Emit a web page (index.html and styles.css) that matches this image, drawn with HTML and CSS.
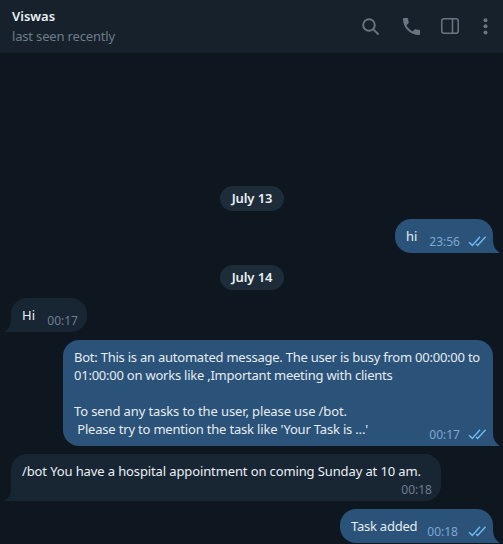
FILE: index.html
```html
<!DOCTYPE html>
<html lang="en">
<head>
<meta charset="utf-8">
<title>Viswas</title>
<link rel="stylesheet" href="styles.css">
</head>
<body>
<svg width="0" height="0" class="defs">
  <symbol id="checks" viewBox="0 0 19 11"><path d="M1 6.200 4.300 9.400 12 .8M8.200 8 9.600 9.400 17.600 .8"/></symbol>
  <symbol id="tail" viewBox="0 0 7 16"><path d="M0 2C0 9 2 12.500 6.300 15.200Q6.600 16 5.500 16H0Z"/></symbol>
</svg>
<header class="topbar">
  <div class="peer">
    <h1>Viswas</h1>
    <p>last seen recently</p>
  </div>
  <nav class="actions">
    <svg class="search" viewBox="0 0 18 18"><circle cx="7" cy="7" r="5.800"/><path d="m11.300 11.300 5.200 5.200"/></svg>
    <svg class="call" viewBox="3 3 18 18"><path d="M6.620 10.790c1.440 2.830 3.760 5.140 6.590 6.590l2.200-2.200c.27-.27.67-.36 1.020-.24 1.120.37 2.330.57 3.570.57.55 0 1 .45 1 1V20c0 .55-.45 1-1 1-9.390 0-17-7.610-17-17 0-.55.45-1 1-1h3.500c.55 0 1 .45 1 1 0 1.250.2 2.450.57 3.570.11.35.03.74-.25 1.020z"/></svg>
    <svg class="panel" viewBox="0 0 18 16"><rect x=".8" y=".8" width="16.400" height="14.400" rx="2.200"/><path d="M11.500 1v14"/></svg>
    <svg class="more" viewBox="0 0 5 17"><circle cx="2.500" cy="2.300" r="2"/><circle cx="2.500" cy="8.300" r="2"/><circle cx="2.500" cy="14.400" r="2"/></svg>
  </nav>
</header>
<main class="chat">
  <div class="date">July 13</div>
  <div class="bubble out w-hi"><span class="text">hi</span><span class="meta"><time>23:56</time><svg class="checks"><use href="#checks"/></svg></span><svg class="tail"><use href="#tail"/></svg></div>
  <div class="date second">July 14</div>
  <div class="bubble in w-hello"><span class="text">Hi</span><span class="meta"><time>00:17</time></span><svg class="tail"><use href="#tail"/></svg></div>
  <div class="bubble out w-auto"><span class="text"><span class="tight">Bot: This is an automated message. The user is busy from 00:00:00 to
01:00:00 on works like ,Important meeting with clients</span>

<span class="loose">To send any tasks to the user, please use /bot.</span>
<span class="snug"> Please try to mention the task like 'Your Task is ...'</span></span><span class="meta"><time>00:17</time><svg class="checks"><use href="#checks"/></svg></span><svg class="tail"><use href="#tail"/></svg></div>
  <div class="bubble in w-task"><span class="text loose">/bot You have a hospital appointment on coming Sunday at 10 am.</span><span class="meta"><time>00:18</time></span><svg class="tail"><use href="#tail"/></svg></div>
  <div class="bubble out w-added"><span class="text tight">Task added</span><span class="meta"><time>00:18</time><svg class="checks"><use href="#checks"/></svg></span><svg class="tail"><use href="#tail"/></svg></div>
</main>
</body>
</html>
```
FILE: styles.css
```css
* { box-sizing: border-box; }
body {
  margin: 0;
  height: 544px;
  overflow: hidden;
  background: #0e1620;
  color: #e9f0f5;
  font: 13px/18px "Noto Sans", "Open Sans", sans-serif;
}
.defs { display: none; }
.topbar {
  display: flex;
  justify-content: space-between;
  height: 53px;
  padding: 7px 15px 0 12px;
  background: #17212b;
}
.peer h1 { margin: 0; font-size: 13px; line-height: 18px; font-weight: 600; }
.peer p { margin: 2px 0 0; line-height: 18px; color: #6d7c8a; letter-spacing: -.17px; }
.actions { display: flex; align-items: flex-start; padding-top: 11px; }
.actions svg { fill: none; stroke: #697681; stroke-width: 1.9; }
.actions .search { width: 18px; height: 18px; margin: 0 23px 0 0; }
.actions .call { width: 17px; height: 17px; margin-right: 21px; fill: #697681; stroke: none; }
.actions .panel { width: 18px; height: 16px; margin: 0 24px 0 0; stroke-width: 1.5; }
.actions .more { width: 5px; height: 17px; fill: #697681; stroke: none; }
.chat { display: flex; flex-direction: column; padding: 133px 10px 0 11px; }
.date {
  align-self: center;
  width: 64px;
  height: 25px;
  border-radius: 13px;
  background: #1e2c3a;
  font-weight: 600;
  line-height: 25px;
  letter-spacing: -.1px;
  text-align: center;
  margin-bottom: 8px;
}
.date.second { margin-top: 12px; }
.bubble {
  position: relative;
  display: flex;
  justify-content: space-between;
  padding: 8px 11px;
  border-radius: 16px;
  height: 34px;
}
.bubble + .bubble { margin-top: 8px; }
.text { white-space: pre; }
.tight { letter-spacing: -.235px; }
.snug { letter-spacing: -.185px; }
.loose { letter-spacing: -.12px; }
.meta {
  display: flex;
  align-self: flex-end;
  height: 18px;
  margin-bottom: -5px;
  font-size: 12px;
  line-height: 18px;
}
.meta time { padding-top: 1px; }
.out { align-self: flex-end; background: #2b5278; color: #e4ecf2; border-bottom-right-radius: 0; }
.in { align-self: flex-start; background: #182533; border-bottom-left-radius: 0; }
.out .meta { color: #7da8d3; margin-right: -5px; }
.in .meta { color: #6d7f8f; margin-right: -2px; }
.checks { width: 19px; height: 11px; margin: 4px 0 0 8px; fill: none; stroke: #6db9f2; stroke-width: 1.5; }
.tail { position: absolute; bottom: 0; width: 7px; height: 16px; }
.out .tail { left: 100%; fill: #2b5278; }
.in .tail { right: 100%; fill: #182533; transform: scaleX(-1); }
.w-hi { width: 98px; }
.w-hello { width: 76px; }
.w-auto { width: 430px; height: 106px; }
.w-task { width: 430px; height: 47px; }
.w-added { width: 153px; }
.w-added .checks { margin-left: 10px; }
.w-auto .meta, .w-task .meta { margin-left: -60px; }
```
